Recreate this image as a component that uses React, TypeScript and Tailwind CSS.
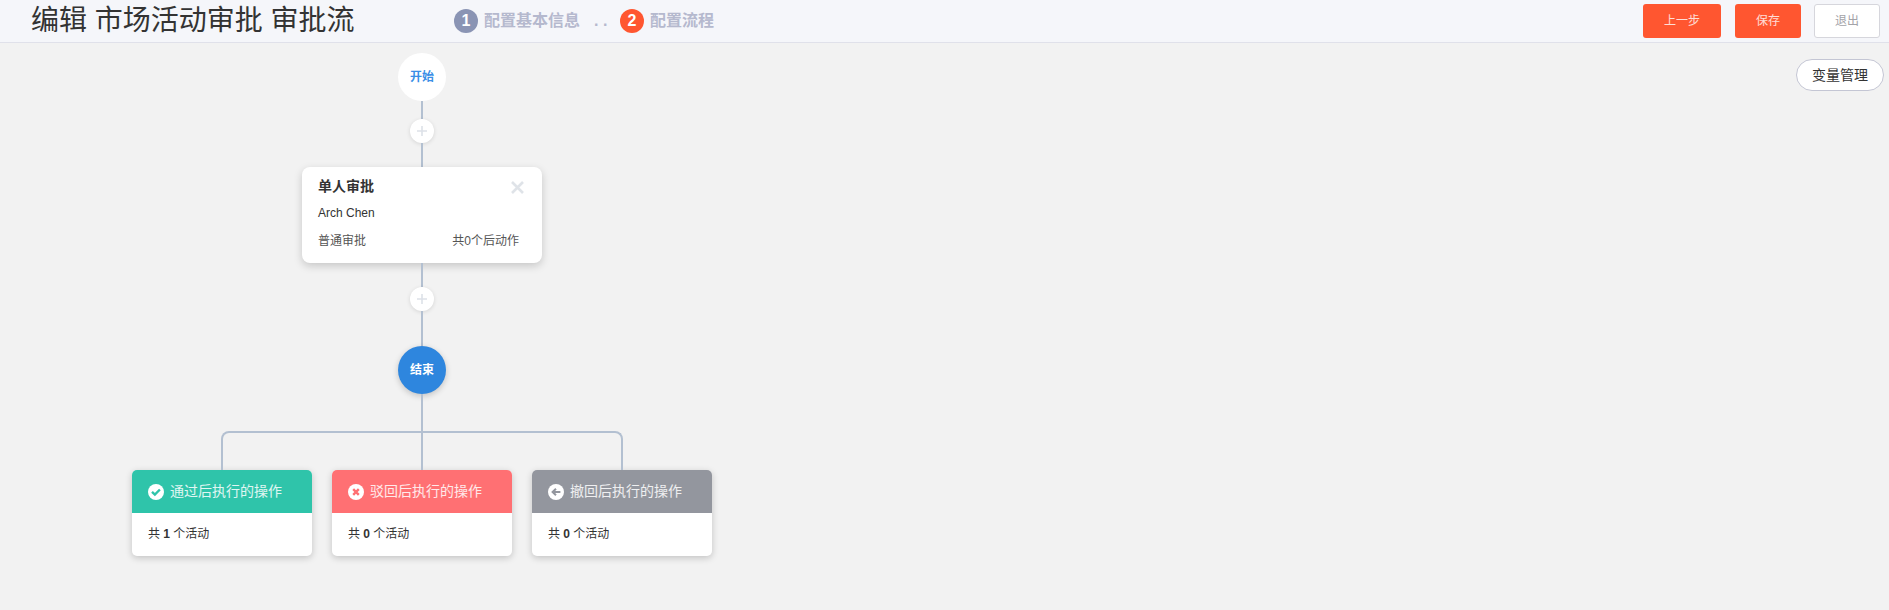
const FONT = "font-['Liberation_Sans','Noto_Sans_CJK_SC',sans-serif]";

function Line({ h }: { h: string }) {
  return <div className={`w-0.5 bg-[#b3c0d1] ${h}`} />;
}

function AddButton() {
  return (
    <div className="flex h-6 w-6 items-center justify-center rounded-full bg-white shadow-[0_1px_4px_rgba(0,0,0,0.12)]">
      <svg width="10" height="10" viewBox="0 0 10 10" className="text-[#dde1e8]">
        <path d="M5 0v10M0 5h10" stroke="currentColor" strokeWidth="1.6" />
      </svg>
    </div>
  );
}

function CheckIcon() {
  return (
    <svg width="16" height="16" viewBox="0 0 16 16" className="shrink-0">
      <circle cx="8" cy="8" r="8" fill="#fff" />
      <path d="M4 7.8l2.9 2.8 5-5.1" fill="none" stroke="#2fc4aa" strokeWidth="2.4" />
    </svg>
  );
}

function CrossIcon() {
  return (
    <svg width="16" height="16" viewBox="0 0 16 16" className="shrink-0">
      <circle cx="8" cy="8" r="8" fill="#fff" />
      <path d="M5.2 5.2l5.6 5.6M10.8 5.2l-5.6 5.6" fill="none" stroke="#ff7073" strokeWidth="2.4" />
    </svg>
  );
}

function BackIcon() {
  return (
    <svg width="16" height="16" viewBox="0 0 16 16" className="shrink-0">
      <circle cx="8" cy="8" r="8" fill="#fff" />
      <path d="M12.4 8H5.5M8 4.8L4.6 8 8 11.2" fill="none" stroke="#93969e" strokeWidth="2" />
    </svg>
  );
}

function ActionCard({ color, icon, title, count }: { color: string; icon: React.ReactNode; title: string; count: number }) {
  return (
    <div className="h-[86px] w-[180px] overflow-hidden rounded-[5px] bg-white shadow-[0_2px_7px_rgba(0,0,0,0.2)]">
      <div className={`flex h-[43px] items-center gap-[6px] pl-4 text-[14px] text-white/85 ${color}`}>
        {icon}
        <span className="-mt-px">{title}</span>
      </div>
      <div className="flex h-[43px] items-center pb-px pl-4 text-[12px] text-[#333]">
        共&nbsp;<b>{count}</b>&nbsp;个活动
      </div>
    </div>
  );
}

export default function App() {
  return (
    <div className={`relative h-screen overflow-hidden bg-[#f2f2f2] ${FONT}`}>
      <header className="flex h-[43px] items-center border-b border-[#e0e1ea] bg-[#f5f6fa] pl-[31px] pr-[9px]">
        <h1 className="w-[423px] text-[28px] font-normal text-[#333]">编辑 市场活动审批 审批流</h1>
        <div className="flex items-center text-[16px] font-bold text-[#b5b9ce]">
          <span className="flex h-6 w-6 items-center justify-center rounded-full bg-[#8a94b4] text-white">1</span>
          <span className="ml-[6px]">配置基本信息</span>
          <span className="ml-[14px] w-[26px]">. .</span>
          <span className="flex h-6 w-6 items-center justify-center rounded-full bg-[#ff5630] text-white">2</span>
          <span className="ml-[6px]">配置流程</span>
        </div>
        <div className="ml-auto flex items-center text-[12px]">
          <button className="h-[34px] w-[78px] rounded-[3px] bg-[#ff5630] text-white/80">上一步</button>
          <button className="ml-[14px] h-[34px] w-[66px] rounded-[3px] bg-[#ff5630] text-white/80">保存</button>
          <button className="ml-[13px] h-[34px] w-[66px] rounded-[3px] border border-[#d6d6dc] bg-white text-[#a3a3a8]">退出</button>
        </div>
      </header>

      <button className="absolute left-[1796px] top-[59px] h-8 w-[88px] rounded-full border border-[#c4c6d4] bg-white text-[14px] text-[#333]">
        变量管理
      </button>

      <main className="ml-[132px] flex w-[580px] flex-col items-center pt-[10px]">
        <div className="flex h-12 w-12 items-center justify-center rounded-full bg-white text-[12px] font-bold text-[#3a8ee6]">开始</div>
        <Line h="h-[18px]" />
        <AddButton />
        <Line h="h-6" />
        <div className="flex h-24 w-60 flex-col rounded-lg bg-white px-4 pt-[9px] text-[12px] text-[#333] shadow-[0_3px_9px_rgba(0,0,0,0.18)]">
          <div className="flex items-center justify-between">
            <span className="text-[14px] font-bold leading-5 text-[#333]">单人审批</span>
            <svg width="13" height="13" viewBox="0 0 13 13" className="mr-[2px] mt-[2px] text-[#dfe3e8]">
              <path d="M1 1l11 11M12 1L1 12" stroke="currentColor" strokeWidth="2.6" />
            </svg>
          </div>
          <div className="mt-[9px] leading-4">Arch Chen</div>
          <div className="mt-[12px] flex justify-between pr-[7px] leading-4 text-[#555]">
            <span>普通审批</span>
            <span>共0个后动作</span>
          </div>
        </div>
        <Line h="h-6" />
        <AddButton />
        <Line h="h-[35px]" />
        <div className="flex h-12 w-12 items-center justify-center rounded-full bg-[#2e86de] text-[12px] font-bold text-white shadow-[0_2px_6px_rgba(0,0,0,0.2)]">结束</div>
        <Line h="h-[37px]" />
        <div className="relative h-[39px] w-[402px] rounded-t-lg border-x-2 border-t-2 border-[#b3c0d1]">
          <div className="absolute left-1/2 top-0 h-full w-0.5 -translate-x-1/2 bg-[#b3c0d1]" />
        </div>
        <div className="flex gap-5">
          <ActionCard color="bg-[#2fc4aa]" icon={<CheckIcon />} title="通过后执行的操作" count={1} />
          <ActionCard color="bg-[#ff7073]" icon={<CrossIcon />} title="驳回后执行的操作" count={0} />
          <ActionCard color="bg-[#93969e]" icon={<BackIcon />} title="撤回后执行的操作" count={0} />
        </div>
      </main>
    </div>
  );
}
